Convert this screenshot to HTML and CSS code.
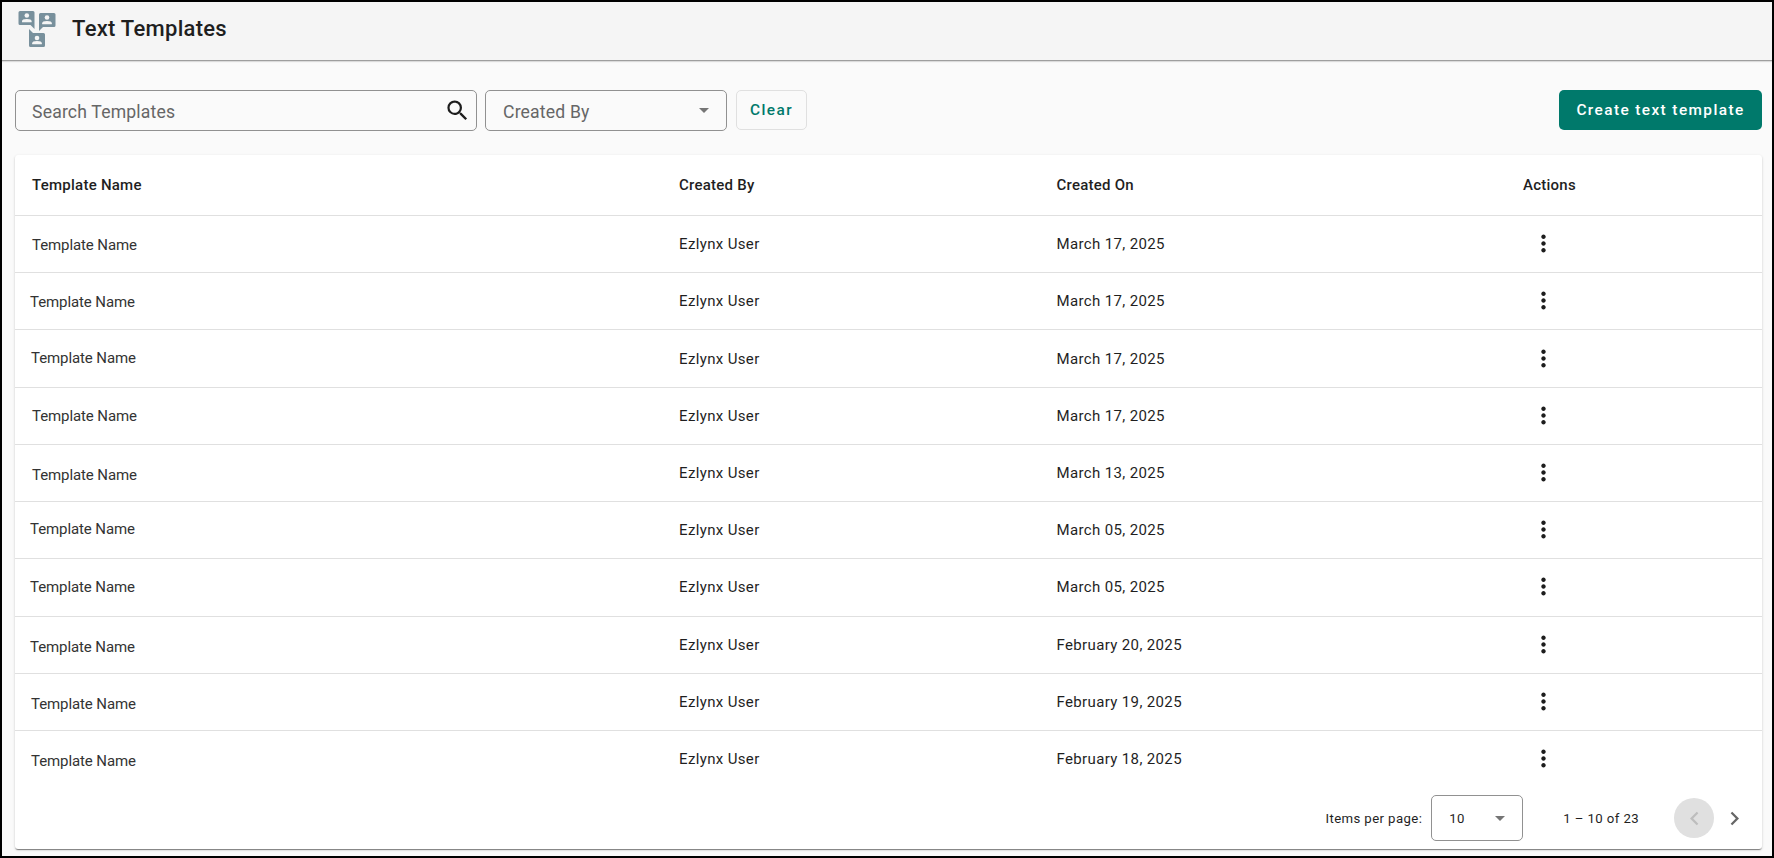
FILE: index.html
```html
<!DOCTYPE html>
<html lang="en">
<head>
<meta charset="utf-8">
<title>Text Templates</title>
<link rel="stylesheet" href="styles.css">
</head>
<body>
<div class="app">
  <header class="topbar">
    <svg class="logo" width="40" height="40" viewBox="0 0 40 40">
      <g fill="#78909c">
        <path d="M2 1h13q1.500 0 1.500 1.500V19l-4-4H2Q.5 15 .5 13.500v-11Q.5 1 2 1z"/>
        <path d="M22.500 3H36q1.500 0 1.500 1.500v11q0 1.500-1.500 1.500H25l-4 4V4.500Q21 3 22.500 3z"/>
        <path d="M11 19l4 4h10.500q1.500 0 1.500 1.500v11q0 1.500-1.500 1.500h-13Q11 37 11 35.500z"/>
      </g>
      <g fill="#f5f5f5">
        <circle cx="8.800" cy="5.500" r="2.300"/><path d="M4 12.300v-1q0-2.300 4.800-2.300t4.800 2.300v1z"/>
        <circle cx="29" cy="7.500" r="2.300"/><path d="M24.200 14.300v-1q0-2.300 4.800-2.300t4.800 2.300v1z"/>
        <circle cx="19" cy="28" r="2.300"/><path d="M14.200 34.300v-1q0-2.300 4.800-2.300t4.800 2.300v1z"/>
      </g>
    </svg>
    <h1 class="title">Text Templates</h1>
  </header>
  <main class="content">
    <div class="toolbar">
      <div class="field search"><span>Search Templates</span>
        <svg width="27" height="27" viewBox="0 0 24 24"><path fill="#1d1d1d" d="M15.500 14h-.79l-.28-.27A6.471 6.471 0 0 0 16 9.500 6.500 6.500 0 1 0 9.500 16c1.610 0 3.090-.59 4.230-1.570l.27.28v.79l5 4.990L20.490 19l-4.990-5zm-6 0C7.010 14 5 11.990 5 9.500S7.010 5 9.500 5 14 7.010 14 9.500 11.990 14 9.500 14z"/></svg>
      </div>
      <div class="field select"><span>Created By</span><i class="caret"></i></div>
      <button class="btn clear">Clear</button>
      <button class="btn create">Create text template</button>
    </div>
    <section class="card">
      <div class="row head"><span>Template Name</span><span>Created By</span><span>Created On</span><span>Actions</span></div>
      <div id="rows"></div>
      <footer class="pager">
        <span class="per-page">Items per page:</span>
        <div class="size"><span>10</span><i class="caret"></i></div>
        <span class="range">1 – 10 of 23</span>
        <span class="nav off"><svg width="27" height="27" viewBox="0 0 24 24"><path fill="#bdbdbd" d="M15.410 7.410L14 6l-6 6 6 6 1.410-1.410L10.830 12z"/></svg></span>
        <span class="nav"><svg width="27" height="27" viewBox="0 0 24 24"><path fill="#666" d="M10 6L8.590 7.410 13.170 12l-4.580 4.590L10 18l6-6z"/></svg></span>
      </footer>
    </section>
  </main>
</div>
<script src="app.js"></script>
</body>
</html>
```
FILE: app.js
```js
// [date, name cell left padding, name cell top shift]
const rows = [
  ['March 17, 2025', 17, 1],
  ['March 17, 2025', 15, 1],
  ['March 17, 2025', 16, -1],
  ['March 17, 2025', 17, 0],
  ['March 13, 2025', 17, 2],
  ['March 05, 2025', 15, -1],
  ['March 05, 2025', 15, 0],
  ['February 20, 2025', 15, 2],
  ['February 19, 2025', 16, 2],
  ['February 18, 2025', 16, 2]
];
const dots = '<svg class="dots" width="27" height="27" viewBox="0 0 24 24"><path d="M12 8c1.100 0 2-.9 2-2s-.9-2-2-2-2 .9-2 2 .9 2 2 2zm0 2c-1.100 0-2 .9-2 2s.9 2 2 2 2-.9 2-2-.9-2-2-2zm0 6c-1.100 0-2 .9-2 2s.9 2 2 2 2-.9 2-2-.9-2-2-2z"/></svg>';
document.getElementById('rows').innerHTML = rows.map(([date, x, y]) =>
  `<div class="row"><span class="name" style="padding-left:${x}px;margin-top:${y * 2}px">Template Name</span><span>Ezlynx User</span><span>${date}</span><span>${dots}</span></div>`
).join('');
```
FILE: styles.css
```css
* { box-sizing: border-box; }
body { margin: 0; font-family: Roboto, sans-serif; color: #1f1f1f; }
.app { width: 1774px; height: 858px; border: 2px solid #000; background: #fafafa; overflow: hidden; }
.topbar { height: 59px; display: flex; align-items: center; padding: 0 16px 2px; background: #f5f5f5; border-bottom: 1px solid #9e9e9e; box-shadow: 0 1px 1px rgba(0,0,0,.12); }
.logo { flex: none; }
.title { margin: 0 0 3px 14px; font-size: 22px; font-weight: 500; letter-spacing: .27px; }
.content { padding: 29px 10px 0 13px; }
.toolbar { display: flex; align-items: flex-start; height: 65px; }
.field { height: 41px; display: flex; align-items: center; border: 1px solid #919191; border-radius: 5px; font-size: 17.600px; letter-spacing: .18px; color: #666; }
.field span { padding-top: 2px; }
.search { width: 462px; padding: 0 5.500px 0 16px; justify-content: space-between; }
.select { width: 242px; margin-left: 8px; padding: 0 17px; justify-content: space-between; }
.caret { border: 5.500px solid transparent; border-top-color: #757575; border-bottom: 0; }
.btn { height: 40px; border-radius: 5px; font: 500 15.400px Roboto, sans-serif; letter-spacing: 1.400px; padding: 0; }
.clear { width: 71px; margin-left: 9px; border: 1px solid #e0e0e0; background: transparent; color: #00796b; }
.create { width: 203px; margin-left: auto; border: 0; background: #00796b; color: #fff; }
.card { height: 694px; background: #fff; border-radius: 3px; box-shadow: 0 2px 1px -1px rgba(0,0,0,.3), 0 1px 1px rgba(0,0,0,.2), 0 1px 3px rgba(0,0,0,.14); }
.row { display: grid; grid-template-columns: 664px 377.500px 466.500px 1fr; align-items: center; height: 57.220px; border-bottom: 1px solid #e0e0e0; font-size: 15px; letter-spacing: .36px; }
#rows .row:last-child { border-bottom-color: transparent; }
.head { height: 61px; font-weight: 500; letter-spacing: .25px; }
.head span:first-child { padding-left: 17px; }
#rows .name { letter-spacing: -.09px; color: #333; }
.dots { display: block; margin: -1px 0 0 6.500px; fill: #1d1d1d; }
.pager { display: flex; align-items: center; justify-content: flex-end; height: 60px; padding-right: 8px; font-size: 13.200px; letter-spacing: .4px; }
.size { width: 92px; height: 46px; margin: 0 40px 0 9px; padding: 0 17px; display: flex; align-items: center; justify-content: space-between; border: 1px solid #919191; border-radius: 5px; }
.range { margin-right: 35px; }
.nav { width: 40px; height: 40px; border-radius: 50%; display: flex; align-items: center; justify-content: center; }
.off { background: #e0e0e0; }
```
